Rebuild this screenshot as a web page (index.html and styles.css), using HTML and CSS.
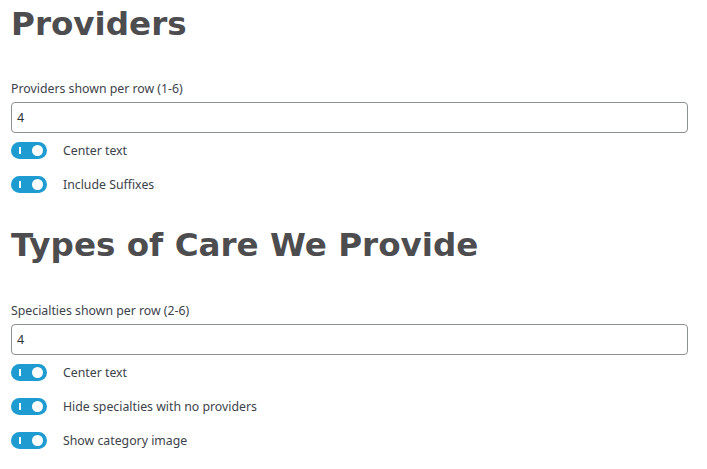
FILE: index.html
```html
<!DOCTYPE html>
<html>
<head>
<meta charset="utf-8">
<link rel="stylesheet" href="styles.css">
</head>
<body>
<section class="section">
  <h1 class="title">Providers</h1>
  <label class="field-label">Providers shown per row (1-6)</label>
  <div class="input">4</div>
  <div class="toggle-row"><span class="toggle"><span class="mark"></span><span class="knob"></span></span><span class="toggle-label">Center text</span></div>
  <div class="toggle-row"><span class="toggle"><span class="mark"></span><span class="knob"></span></span><span class="toggle-label">Include Suffixes</span></div>
</section>
<section class="section">
  <h1 class="title">Types of Care We Provide</h1>
  <label class="field-label">Specialties shown per row (2-6)</label>
  <div class="input">4</div>
  <div class="toggle-row"><span class="toggle"><span class="mark"></span><span class="knob"></span></span><span class="toggle-label">Center text</span></div>
  <div class="toggle-row"><span class="toggle"><span class="mark"></span><span class="knob"></span></span><span class="toggle-label">Hide specialties with no providers</span></div>
  <div class="toggle-row"><span class="toggle"><span class="mark"></span><span class="knob"></span></span><span class="toggle-label">Show category image</span></div>
</section>
</body>
</html>
```

FILE: styles.css
```css
html, body {
  margin: 0;
  padding: 0;
  background: #ffffff;
}
body {
  padding: 0 19px 0 11px;
  font-family: "Noto Sans", "Open Sans", sans-serif;
  color: #3c434a;
}
.section {
  display: flex;
  flex-direction: column;
}
.title {
  margin: 0;
  font-family: "DejaVu Sans", sans-serif;
  font-weight: bold;
  font-size: 32.6px;
  line-height: 48px;
  color: #4d4d4f;
  letter-spacing: 0;
}
.field-label {
  display: block;
  margin-top: 32px;
  font-size: 12.3px;
  line-height: 18px;
  color: #3c434a;
}
.input {
  margin-top: 4px;
  height: 29px;
  border: 1px solid #8c8f94;
  border-radius: 4px;
  padding: 0 5px;
  font-size: 12.5px;
  line-height: 29px;
  color: #2c3338;
}
.toggle-row {
  display: flex;
  align-items: center;
  height: 34px;
}
.toggle {
  position: relative;
  width: 36px;
  height: 17px;
  border-radius: 9px;
  background: #1e9bd1;
  flex: none;
}
.mark {
  position: absolute;
  left: 8px;
  top: 5px;
  width: 2px;
  height: 7px;
  background: #fff;
}
.knob {
  position: absolute;
  right: 4px;
  top: 3px;
  width: 11px;
  height: 11px;
  border-radius: 50%;
  background: #fff;
}
.toggle-label {
  margin-left: 16px;
  font-size: 12.3px;
  color: #3c434a;
}
.section + .section .title {
  margin-top: 20px;
}
.section + .section .field-label {
  margin-top: 33px;
}
```
